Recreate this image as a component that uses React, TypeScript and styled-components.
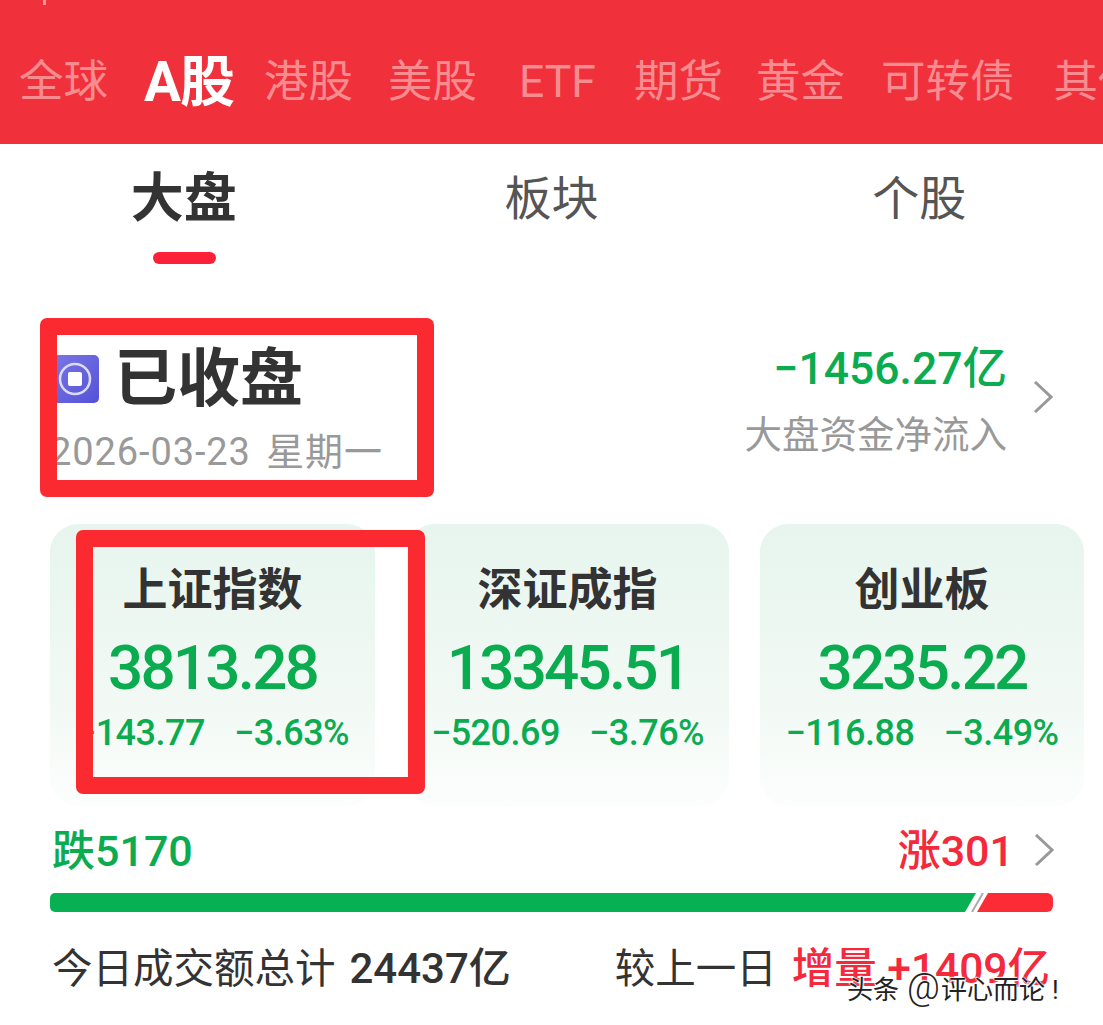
import React from 'react';
import styled, {createGlobalStyle} from 'styled-components';

const GREEN = '#0bab50'
const RED = '#f5283c'
const DARK = '#333333'
const GREY = '#999999'
const CJK = `Roboto, "Noto Sans CJK SC", sans-serif`

const GlobalStyle = createGlobalStyle`
    html, body {
        margin: 0;
        padding: 0;
        background: #fff;
    }
    body {
        font-family: ${CJK};
    }
`

const Page = styled.div`
    position: relative;
    width: 1103px;
    height: 1025px;
    overflow: hidden;
    background: #fff;
`

const MarketBar = styled.div`
    position: relative;
    display: flex;
    align-items: center;
    height: 144px;
    padding: 19px 0 0 19px;
    box-sizing: border-box;
    background: #f0313b;
    overflow: hidden;
    white-space: nowrap;
`

const StatusTick = styled.span`
    position: absolute;
    left: 43px;
    top: 0;
    width: 3px;
    height: 5px;
    background: rgba(255, 255, 255, .5);
`

const MarketTab = styled.span<{$active?: boolean, $gap: number}>`
    flex: none;
    margin-right: ${p => p.$gap}px;
    font-size: ${p => p.$active ? 55 : 44.5}px;
    font-weight: ${p => p.$active ? 700 : 400};
    line-height: 60px;
    letter-spacing: ${p => p.$active ? '-1px' : '0'};
    color: ${p => p.$active ? '#fff' : 'rgba(255, 255, 255, .45)'};
`

const SubTabs = styled.div`
    display: grid;
    grid-template-columns: repeat(3, 1fr);
    height: 134px;
`

const SubTab = styled.div<{$active?: boolean}>`
    position: relative;
    padding-top: 20px;
    text-align: center;
    font-size: ${p => p.$active ? 53 : 47}px;
    font-weight: ${p => p.$active ? 700 : 400};
    line-height: 70px;
    color: ${p => p.$active ? DARK : '#555'};
`

const Underline = styled.span`
    position: absolute;
    left: 50%;
    top: 108px;
    width: 63px;
    height: 12px;
    margin-left: -31px;
    border-radius: 6px;
    background: #fb2139;
`

const SummaryRow = styled.section`
    display: flex;
    justify-content: space-between;
    align-items: flex-start;
    height: 246px;
    padding: 66px 50px 0;
    box-sizing: border-box;
`

const StatusTitle = styled.div`
    display: flex;
    align-items: center;
    gap: 15px;
    height: 70px;
`

const StatusBadge = styled.span`
    display: flex;
    align-items: center;
    justify-content: center;
    width: 49px;
    height: 48px;
    border-radius: 5px;
    background: linear-gradient(135deg, #7a78e6, #5551d8);
`

const StatusText = styled.span`
    font-size: 63px;
    font-weight: 700;
    line-height: 70px;
    color: ${DARK};
`

const DateText = styled.div`
    margin-top: 15px;
    font-size: 38px;
    line-height: 46px;
    letter-spacing: .9px;
    word-spacing: 5px;
    color: ${GREY};
`

const FlowBlock = styled.div`
    display: flex;
    align-items: center;
    gap: 26px;
`

const FlowText = styled.div`
    text-align: right;
`

const FlowValue = styled.div`
    font-size: 44.5px;
    font-weight: 500;
    line-height: 50px;
    color: ${GREEN};
`

const FlowLabel = styled.div`
    margin-top: 16px;
    font-size: 37.5px;
    line-height: 50px;
    color: ${GREY};
`

const Chevron = styled.svg<{$lift?: number}>`
    display: block;
    flex: none;
    margin-top: ${p => -(p.$lift ?? 0)}px;
`

const IndexGrid = styled.div`
    display: grid;
    grid-template-columns: 325px 322px 324px;
    gap: 31.5px;
    padding-left: 50px;
`

const IndexCard = styled.div`
    height: 282px;
    border-radius: 28px;
    padding-top: 38px;
    box-sizing: border-box;
    text-align: center;
    background: linear-gradient(180deg, #e7f5ee 0%, #f2f9f5 65%, #fcfefd 100%);
`

const IndexName = styled.div`
    font-size: 45px;
    font-weight: 700;
    line-height: 58px;
    color: ${DARK};
`

const IndexValue = styled.div`
    margin-top: 17px;
    font-size: 62px;
    font-weight: 500;
    line-height: 62px;
    letter-spacing: -2.8px;
    color: ${GREEN};
`

const IndexChange = styled.div`
    display: flex;
    justify-content: center;
    gap: 29px;
    margin-top: 12px;
    font-size: 36px;
    font-weight: 500;
    line-height: 44px;
    letter-spacing: -.5px;
    color: ${GREEN};
`

const BreadthRow = styled.div`
    display: flex;
    align-items: center;
    justify-content: space-between;
    height: 60px;
    margin-top: 15px;
    padding: 0 49px 0 52px;
`

const BreadthLabel = styled.span<{$up?: boolean}>`
    margin-top: -8px;
    font-size: 43px;
    font-weight: 500;
    color: ${p => p.$up ? RED : GREEN};
`

const BreadthRight = styled.div`
    display: flex;
    align-items: center;
    gap: 20px;
`

const Bar = styled.div`
    display: flex;
    height: 19px;
    margin: 12px 50px 0;
`

const BarGreen = styled.div`
    width: 926px;
    background: #08b054;
    border-radius: 5px 0 0 5px;
    clip-path: polygon(0 0, 100% 0, calc(100% - 11px) 100%, 0 100%);
`

const BarSlash = styled.svg`
    display: block;
    flex: none;
    margin: 0 -8px 0 -5px;
`

const BarRed = styled.div`
    flex: 1;
    background: #fb2c36;
    border-radius: 0 6px 6px 0;
    clip-path: polygon(11px 0, 100% 0, 100% 100%, 0 100%);
`

const TotalRow = styled.div`
    display: flex;
    align-items: center;
    justify-content: space-between;
    height: 60px;
    margin-top: 27px;
    padding: 0 53px 0 52px;
    white-space: nowrap;
`

const TotalLabel = styled.span`
    font-size: 40.5px;
    line-height: 60px;
    color: ${DARK};
`

const TotalStrong = styled.span`
    margin-left: 14px;
    font-size: 42px;
    font-weight: 500;
`

const DeltaGroup = styled.div`
    display: flex;
    align-items: center;
    gap: 15px;
`

const DeltaValue = styled.span`
    font-size: 42.5px;
    font-weight: 500;
    line-height: 60px;
    color: ${RED};
`

const Watermark = styled.div`
    position: absolute;
    left: 847px;
    top: 970px;
    font-size: 26px;
    line-height: 34px;
    white-space: nowrap;
    color: #222;
    text-shadow: 0 0 2px #fff, 0 0 2px #fff, 1px 1px 1px #fff, -1px -1px 1px #fff;
`

const WatermarkAt = styled.span`
    margin: 0 1px 0 8px;
    font-size: 36px;
    font-weight: 300;
`

const WatermarkBang = styled.span`
    margin-left: 7px;
`

const MarkBox = styled.div<{$left: number, $top: number, $width: number, $height: number}>`
    position: absolute;
    left: ${p => p.$left}px;
    top: ${p => p.$top}px;
    width: ${p => p.$width}px;
    height: ${p => p.$height}px;
    box-sizing: border-box;
    border: 17px solid #fb2a30;
    border-radius: 7px;
    pointer-events: none;
`

const MARKETS = [
    {label: '全球', gap: 36},
    {label: 'A股', gap: 30, active: true},
    {label: '港股', gap: 35},
    {label: '美股', gap: 42},
    {label: 'ETF', gap: 38},
    {label: '期货', gap: 33},
    {label: '黄金', gap: 36},
    {label: '可转债', gap: 39},
    {label: '其他', gap: 0},
]

const INDEXES = [
    {name: '上证指数', value: '3813.28', change: '−143.77', percent: '−3.63%'},
    {name: '深证成指', value: '13345.51', change: '−520.69', percent: '−3.76%'},
    {name: '创业板', value: '3235.22', change: '−116.88', percent: '−3.49%'},
]

const RightArrow = ({lift}: {lift?: number}) => (
    <Chevron $lift={lift} width="20" height="32" viewBox="0 0 20 32" fill="none">
        <path d="M2 1 L18 16 L2 31" stroke="#999" strokeWidth="3"/>
    </Chevron>
)

const App = () => (
    <Page>
        <GlobalStyle/>
        <MarketBar>
            <StatusTick/>
            {MARKETS.map(m => (
                <MarketTab key={m.label} $active={m.active} $gap={m.gap}>{m.label}</MarketTab>
            ))}
        </MarketBar>
        <SubTabs>
            <SubTab $active>大盘<Underline/></SubTab>
            <SubTab>板块</SubTab>
            <SubTab>个股</SubTab>
        </SubTabs>
        <SummaryRow>
            <div>
                <StatusTitle>
                    <StatusBadge>
                        <svg width="34" height="34" viewBox="0 0 34 34" fill="none">
                            <circle cx="17" cy="17" r="15" stroke="#dcdcf8" strokeWidth="2.5"/>
                            <rect x="10" y="10" width="14" height="14" rx="2" fill="#fff"/>
                        </svg>
                    </StatusBadge>
                    <StatusText>已收盘</StatusText>
                </StatusTitle>
                <DateText>2026-03-23 星期一</DateText>
            </div>
            <FlowBlock>
                <FlowText>
                    <FlowValue>−1456.27亿</FlowValue>
                    <FlowLabel>大盘资金净流入</FlowLabel>
                </FlowText>
                <RightArrow lift={10}/>
            </FlowBlock>
        </SummaryRow>
        <IndexGrid>
            {INDEXES.map(i => (
                <IndexCard key={i.name}>
                    <IndexName>{i.name}</IndexName>
                    <IndexValue>{i.value}</IndexValue>
                    <IndexChange>
                        <span>{i.change}</span>
                        <span>{i.percent}</span>
                    </IndexChange>
                </IndexCard>
            ))}
        </IndexGrid>
        <BreadthRow>
            <BreadthLabel>跌5170</BreadthLabel>
            <BreadthRight>
                <BreadthLabel $up>涨301</BreadthLabel>
                <RightArrow lift={2}/>
            </BreadthRight>
        </BreadthRow>
        <Bar>
            <BarGreen/>
            <BarSlash width="14" height="19" viewBox="0 0 14 19" fill="none">
                <path d="M1 19 L12 0" stroke="#aaa" strokeWidth="2"/>
            </BarSlash>
            <BarRed/>
        </Bar>
        <TotalRow>
            <TotalLabel>今日成交额总计<TotalStrong>24437亿</TotalStrong></TotalLabel>
            <DeltaGroup>
                <TotalLabel>较上一日</TotalLabel>
                <DeltaValue>增量 +1409亿</DeltaValue>
            </DeltaGroup>
        </TotalRow>
        <Watermark>头条<WatermarkAt>@</WatermarkAt>评心而论<WatermarkBang>!</WatermarkBang></Watermark>
        <MarkBox $left={40} $top={318} $width={394} $height={179}/>
        <MarkBox $left={76} $top={530} $width={349} $height={264}/>
    </Page>
)

export default App
